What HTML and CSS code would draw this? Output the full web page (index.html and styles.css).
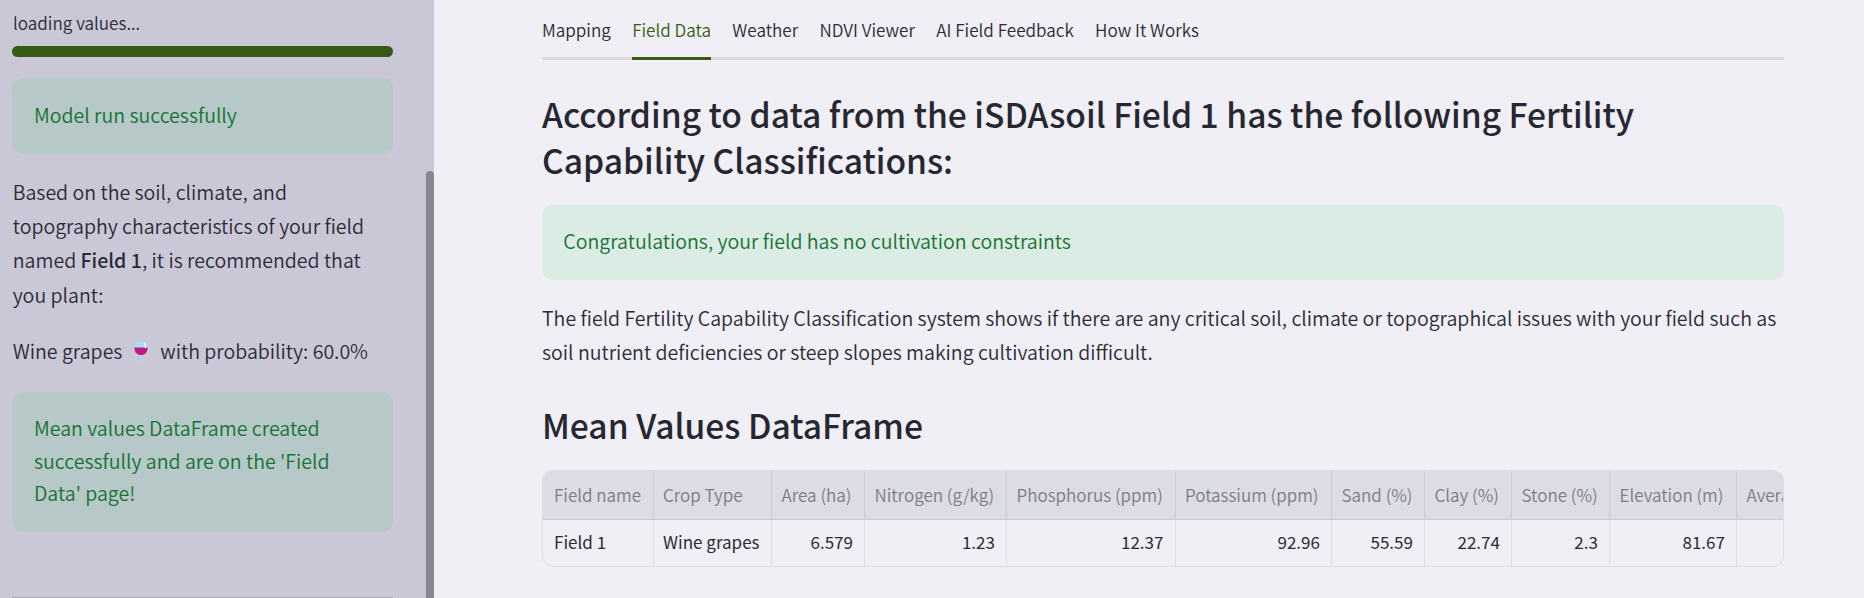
FILE: index.html
```html
<!DOCTYPE html>
<html lang="en">
<head>
<meta charset="utf-8">
<title>Field Data</title>
<link rel="stylesheet" href="styles.css">
</head>
<body>
<div class="app">
  <aside class="sidebar">
    <div class="sidebar-content">
      <p class="progress-label">loading values...</p>
      <div class="progress"></div>
      <div class="alert alert-model">Model run successfully</div>
      <p class="text advice">Based on the soil, climate, and<br>topography characteristics of your field<br>named <strong>Field 1</strong>, it is recommended that<br>you plant:</p>
      <p class="text crop">Wine grapes <svg class="wine" viewBox="0 0 24 24" aria-hidden="true"><path d="M6.400 1h11.200l1.500 6.800H4.900z" fill="#aadcfc"/><path d="M4.800 7.200h14.400c.3 5-3.200 8.300-7.200 8.300S4.500 12.200 4.800 7.200z" fill="#be1a80"/><path d="M14.600 1.800l2 .1 1.200 5.800-1.300.1z" fill="#f5fbff"/><path d="M11.500 15.500h1v7h3.500v1H8v-1h3.500z" fill="#aadcfc"/></svg> with probability: 60.0%</p>
      <div class="alert alert-mean">Mean values DataFrame created<br>successfully and are on the 'Field<br>Data' page!</div>
      <hr class="rule">
    </div>
    <div class="scrollbar"></div>
  </aside>
  <main class="main">
    <nav class="tabs">
      <a class="tab">Mapping</a>
      <a class="tab active">Field Data</a>
      <a class="tab">Weather</a>
      <a class="tab">NDVI Viewer</a>
      <a class="tab">AI Field Feedback</a>
      <a class="tab">How It Works</a>
    </nav>
    <h2 class="heading">According to data from the iSDAsoil Field 1 has the following Fertility<br>Capability Classifications:</h2>
    <div class="alert alert-main">Congratulations, your field has no cultivation constraints</div>
    <p class="text description">The field Fertility Capability Classification system shows if there are any critical soil, climate or topographical issues with your field such as<br>soil nutrient deficiencies or steep slopes making cultivation difficult.</p>
    <h2 class="heading heading-table">Mean Values DataFrame</h2>
    <div class="frame">
      <div class="row head">
        <span>Field name</span><span>Crop Type</span><span>Area (ha)</span><span>Nitrogen (g/kg)</span><span>Phosphorus (ppm)</span><span>Potassium (ppm)</span><span>Sand (%)</span><span>Clay (%)</span><span>Stone (%)</span><span>Elevation (m)</span><span>Avera</span>
      </div>
      <div class="row values">
        <span>Field 1</span><span>Wine grapes</span><span>6.579</span><span>1.23</span><span>12.37</span><span>92.96</span><span>55.59</span><span>22.74</span><span>2.3</span><span>81.67</span><span></span>
      </div>
    </div>
  </main>
</div>
</body>
</html>
```
FILE: styles.css
```css
* { box-sizing: border-box; }
body {
  margin: 0;
  background: #f0eff5;
  color: #2c2b37;
  font-family: "Noto Sans CJK SC", "Noto Sans", sans-serif;
  font-size: 19.56px;
  font-weight: 350;
  overflow: hidden;
}
p, h2 { margin: 0; }
strong { font-weight: 500; }
.app { display: flex; height: 598px; overflow: hidden; }
.sidebar { width: 434px; display: flex; justify-content: space-between; background: #cac8d7; }
.sidebar-content { width: 393px; padding: 8px 0 0 12px; white-space: nowrap; }
.progress-label { padding-left: 1px; font-size: 17.1px; line-height: 30px; height: 38px; }
.progress { height: 11px; border-radius: 6px; background: #385a17; }
.alert { border-radius: 10.7px; line-height: 32.5px; color: #177233; white-space: nowrap; }
.alert-model { margin-top: 21px; height: 76px; padding: 20.5px 22px; background: #b6c8c8; }
.text { line-height: 34.2px; white-space: nowrap; }
.advice { margin-top: 21px; padding-left: 0.7px; }
.crop { margin-top: 22.2px; height: 34px; padding-left: 0.7px; }
.wine { width: 22px; height: 22px; vertical-align: -4px; margin: 0 3.5px; }
.alert-mean { margin-top: 23.5px; height: 140px; padding: 20.5px 22px; background: #b6c8c8; }
.rule { border: 0; height: 1px; margin: 65px 0 0; background: #a9a8b6; }
.scrollbar { width: 8px; margin-top: 171px; border-radius: 4px 4px 0 0; background: #888693; }
.main { width: 1242px; margin-left: 108px; }
.tabs { display: flex; gap: 21.3px; height: 60px; padding-top: 3px; box-shadow: inset 0 -3px #dcdce2; font-size: 17.12px; line-height: 54px; white-space: nowrap; }
.tab { height: 57px; }
.tab.active { color: #385f18; border-bottom: 3px solid #385a17; }
.heading { margin-top: 31px; font-size: 33.6px; line-height: 46px; font-weight: 500; color: #262730; white-space: nowrap; }
.alert-main { margin-top: 22px; height: 75px; padding: 20px 21.3px; background: #dbece4; }
.description { margin-top: 21px; }
.heading-table { margin-top: 33px; }
.frame { margin-top: 22px; height: 97px; border: 1px solid #dcdce3; border-radius: 10.7px; overflow: hidden; font-size: 17.05px; white-space: nowrap; }
.row { display: grid; grid-template-columns: 110.5px 118.5px 93px 142px 168.5px 156.5px 93px 87px 98px 127px 47px; }
.row span { border-right: 1px solid #dcdce3; padding: 0 11px 0 9.5px; }
.row span:first-child { padding-left: 11px; }
.row span:last-child { border-right: 0; padding-right: 0; overflow: hidden; }
.head { height: 49px; line-height: 47px; color: #7c7b88; background: #dcdce5; border-bottom: 1px solid #cac9d5; }
.head span { border-color: #cac9d5; }
.values { line-height: 44px; height: 46px; font-weight: 400; }
.values span:nth-child(n+3) { text-align: right; }
```
